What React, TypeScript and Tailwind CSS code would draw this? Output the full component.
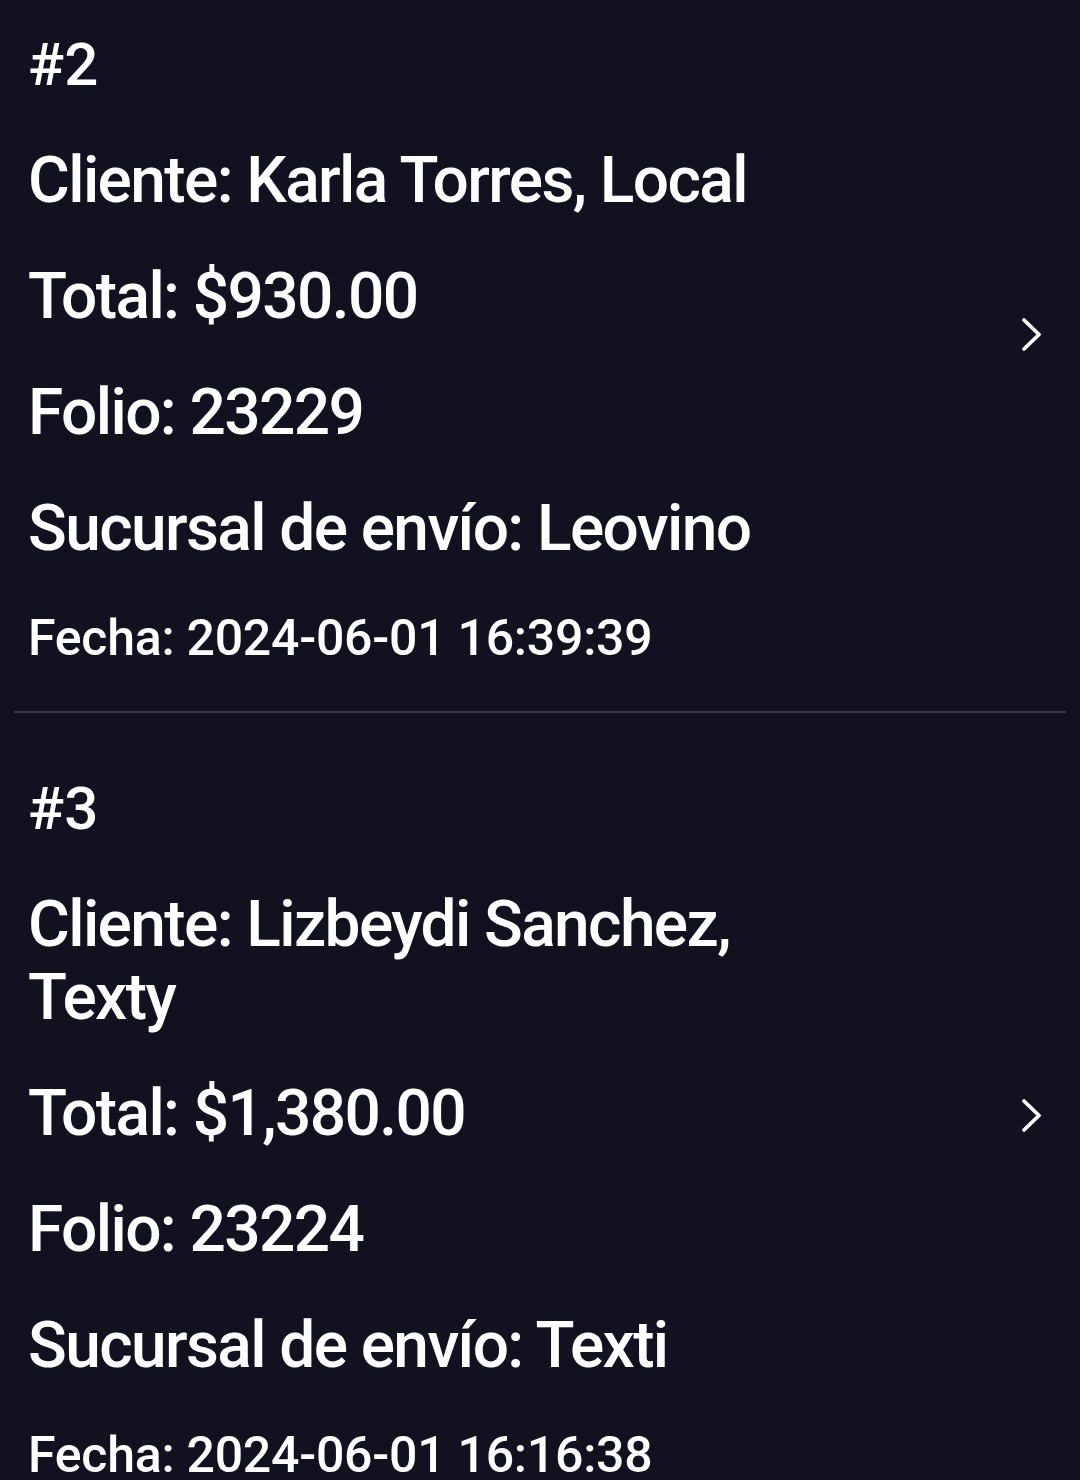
import { Fragment } from 'react';

type Pedido = {
  num: number;
  cliente: string;
  total: string;
  folio: string;
  sucursal: string;
  fecha: string;
};

const pedidos: Pedido[] = [
  {
    num: 2,
    cliente: 'Karla Torres, Local',
    total: '$930.00',
    folio: '23229',
    sucursal: 'Leovino',
    fecha: '2024-06-01 16:39:39',
  },
  {
    num: 3,
    cliente: 'Lizbeydi Sanchez, Texty',
    total: '$1,380.00',
    folio: '23224',
    sucursal: 'Texti',
    fecha: '2024-06-01 16:16:38',
  },
];

function Chevron() {
  return (
    <svg width="30" height="40" viewBox="0 0 30 40" fill="none" className="mb-[26px]">
      <polyline
        points="8,5 23,19.5 8,34"
        stroke="white"
        strokeWidth="3.8"
        strokeLinecap="round"
        strokeLinejoin="round"
      />
    </svg>
  );
}

function PedidoItem({ p, first }: { p: Pedido; first: boolean }) {
  return (
    <div className={`flex items-center pl-[28px] pr-[34px] pb-[43px] ${first ? 'pt-[28px]' : 'pt-[59px]'}`}>
      <div className="flex-1 flex flex-col gap-[43px] text-white font-medium">
        <p className="text-[60px] leading-[73px]">#{p.num}</p>
        <p className="text-[64px] leading-[73px] tracking-[-1.6px] max-w-[800px]">Cliente: {p.cliente}</p>
        <p className="text-[64px] leading-[73px] tracking-[-1.6px]">Total: {p.total}</p>
        <p className="text-[64px] leading-[73px] tracking-[-1.6px]">Folio: {p.folio}</p>
        <p className="text-[64px] leading-[73px] tracking-[-1.6px]">Sucursal de envío: {p.sucursal}</p>
        <p className="text-[50px] leading-[60px] tracking-[-0.25px]">Fecha: {p.fecha}</p>
      </div>
      <Chevron />
    </div>
  );
}

export default function App() {
  return (
    <div
      className="min-h-screen h-[1480px] overflow-hidden bg-[#11111f]"
      style={{ fontFamily: 'Roboto, "Noto Sans", sans-serif' }}
    >
      {pedidos.map((p, i) => (
        <Fragment key={p.num}>
          {i > 0 && <div className="mx-[14px] h-[2px] bg-[#363645]" />}
          <PedidoItem p={p} first={i === 0} />
        </Fragment>
      ))}
    </div>
  );
}
